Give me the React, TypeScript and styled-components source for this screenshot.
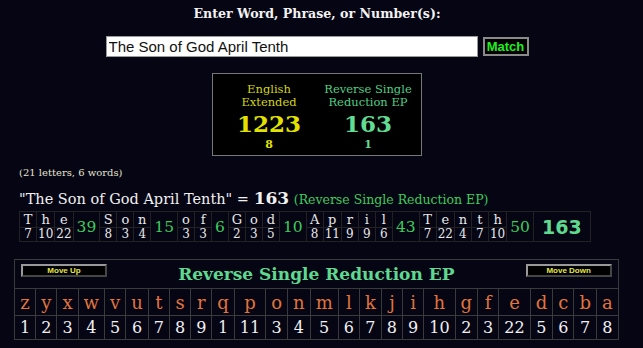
import styled, { createGlobalStyle } from 'styled-components'

const GlobalStyle = createGlobalStyle`
  html, body {
    margin: 0;
    padding: 0;
    background: #050514;
  }
  body {
    font-family: "DejaVu Serif", serif;
    color: #eeeeee;
  }
`

const phrase = 'The Son of God April Tenth'

const words = [
  { letters: ['T', 'h', 'e'], values: [7, 10, 22], total: 39 },
  { letters: ['S', 'o', 'n'], values: [8, 3, 4], total: 15 },
  { letters: ['o', 'f'], values: [3, 3], total: 6 },
  { letters: ['G', 'o', 'd'], values: [2, 3, 5], total: 10 },
  { letters: ['A', 'p', 'r', 'i', 'l'], values: [8, 11, 9, 9, 6], total: 43 },
  { letters: ['T', 'e', 'n', 't', 'h'], values: [7, 22, 4, 7, 10], total: 50 },
]

const cipher = [
  ['z', 1], ['y', 2], ['x', 3], ['w', 4], ['v', 5], ['u', 6], ['t', 7],
  ['s', 8], ['r', 9], ['q', 1], ['p', 11], ['o', 3], ['n', 4], ['m', 5],
  ['l', 6], ['k', 7], ['j', 8], ['i', 9], ['h', 10], ['g', 2], ['f', 3],
  ['e', 22], ['d', 5], ['c', 6], ['b', 7], ['a', 8],
] as const

export default function App() {
  return (
    <>
      <GlobalStyle />
      <Page>
        <Heading>Enter Word, Phrase, or Number(s):</Heading>
        <SearchRow>
          <PhraseInput defaultValue={phrase} />
          <MatchButton>Match</MatchButton>
        </SearchRow>
        <ScoreBox>
          <ScoreCol tone="#d4d414" strong="#e2e200">
            <ScoreLabel>
              English
              <br />
              Extended
            </ScoreLabel>
            <ScoreValue>1223</ScoreValue>
            <ScoreSub>8</ScoreSub>
          </ScoreCol>
          <ScoreCol tone="#4fcf86" strong="#62dc93">
            <ScoreLabel>
              Reverse Single
              <br />
              Reduction EP
            </ScoreLabel>
            <ScoreValue>163</ScoreValue>
            <ScoreSub>1</ScoreSub>
          </ScoreCol>
        </ScoreBox>

        <Details>
          <Counts>(21 letters, 6 words)</Counts>
          <Result>
            "{phrase}" = <ResultNum>163</ResultNum>{' '}
            <ResultCipher>(Reverse Single Reduction EP)</ResultCipher>
          </Result>
          <Breakdown>
            <tbody>
              <tr>
                {words.map((w, wi) => [
                  ...w.letters.map((l, li) => (
                    <LetterCell key={`l${wi}-${li}`}>{l}</LetterCell>
                  )),
                  <WordTotal key={`t${wi}`} rowSpan={2}>
                    {w.total}
                  </WordTotal>,
                ])}
                <GrandTotal rowSpan={2}>163</GrandTotal>
              </tr>
              <tr>
                {words.map((w, wi) =>
                  w.values.map((v, vi) => (
                    <ValueCell key={`v${wi}-${vi}`}>{v}</ValueCell>
                  )),
                )}
              </tr>
            </tbody>
          </Breakdown>
        </Details>

        <CipherTable>
          <tbody>
            <tr>
              <HeaderCell colSpan={26}>
                <HeaderBar>
                  <MoveButton>Move Up</MoveButton>
                  <CipherTitle>Reverse Single Reduction EP</CipherTitle>
                  <MoveButton>Move Down</MoveButton>
                </HeaderBar>
              </HeaderCell>
            </tr>
            <tr>
              {cipher.map(([l]) => (
                <CipherLetter key={l}>{l}</CipherLetter>
              ))}
            </tr>
            <tr>
              {cipher.map(([l, v]) => (
                <CipherValue key={l}>{v}</CipherValue>
              ))}
            </tr>
          </tbody>
        </CipherTable>
      </Page>
    </>
  )
}

const Page = styled.div`
  width: 634px;
  padding-top: 6px;
`
const Heading = styled.div`
  text-align: center;
  font-weight: bold;
  font-size: 12.6px;
  line-height: 16px;
  color: #f2f2f2;
`
const SearchRow = styled.div`
  display: flex;
  justify-content: center;
  align-items: center;
  gap: 5px;
  margin-top: 14px;
`
const PhraseInput = styled.input`
  box-sizing: border-box;
  width: 372px;
  height: 21px;
  padding: 0 2px;
  border: 1px solid #999;
  background: #fff;
  color: #111;
  font-family: "Liberation Sans", Arial, sans-serif;
  font-size: 15px;
  outline: none;
`
const MatchButton = styled.button`
  box-sizing: border-box;
  height: 19px;
  width: 46px;
  padding: 0;
  background: #000;
  color: #22ee22;
  border: 2px solid #8a8a8a;
  font-family: "Liberation Sans", Arial, sans-serif;
  font-weight: bold;
  font-size: 13px;
  line-height: 14px;
`
const ScoreBox = styled.div`
  box-sizing: border-box;
  width: 210px;
  height: 83px;
  margin: 16px auto 0;
  display: flex;
  justify-content: space-between;
  padding: 9px 6px 0 9px;
  background: #000;
  border: 1px solid #777;
`
const ScoreCol = styled.div<{ tone: string; strong: string }>`
  width: 94px;
  display: flex;
  flex-direction: column;
  align-items: center;
  color: ${(p) => p.tone};

  & > :not(:first-child) {
    color: ${(p) => p.strong};
  }
`
const ScoreLabel = styled.div`
  font-size: 11.5px;
  line-height: 13px;
  text-align: center;
`
const ScoreValue = styled.div`
  font-size: 23px;
  font-weight: bold;
  line-height: 26px;
  margin-top: 2px;
`
const ScoreSub = styled.div`
  font-size: 11px;
  font-weight: bold;
  line-height: 13px;
  margin-top: 1px;
`
const Details = styled.div`
  padding-left: 19px;
  margin-top: 10px;
`
const Counts = styled.div`
  font-size: 10px;
  line-height: 14px;
  color: #e4e4d0;
`
const Result = styled.div`
  margin-top: 9px;
  font-size: 14.5px;
  line-height: 18px;
  color: #f0f0f0;
`
const ResultNum = styled.span`
  font-size: 17px;
  font-weight: bold;
`
const ResultCipher = styled.span`
  font-size: 12.5px;
  color: #3dcc5c;
`
const Breakdown = styled.table`
  border-collapse: collapse;
  margin-top: 2px;
`
const LetterCell = styled.td`
  border: 1px solid #222;
  width: 14px;
  padding: 0 1px;
  height: 15px;
  font-size: 13px;
  line-height: 15px;
  text-align: center;
  color: #e8e8e8;
`
const ValueCell = styled(LetterCell)`
  height: 13px;
  font-size: 12px;
  line-height: 13px;
`
const WordTotal = styled.td`
  border: 1px solid #222;
  padding: 0 3px;
  font-size: 15.5px;
  text-align: center;
  color: #3dcc5c;
`
const GrandTotal = styled.td`
  border: 1px solid #222;
  padding: 0 8px;
  font-family: "DejaVu Sans", Verdana, sans-serif;
  font-size: 19px;
  font-weight: bold;
  color: #5fd98f;
`
const CipherTable = styled.table`
  border-collapse: collapse;
  margin: 17px 0 0 14px;
  border: 1px solid #3a3a3a;
`
const HeaderCell = styled.td`
  padding: 3px 6px 0 6px;
  height: 25px;
  vertical-align: top;
`
const HeaderBar = styled.div`
  display: flex;
  justify-content: space-between;
  align-items: flex-start;
`
const MoveButton = styled.button`
  box-sizing: border-box;
  width: 86px;
  height: 13px;
  margin-top: 1px;
  padding: 0;
  background: #000;
  border: 2px outset #999;
  color: #e6e64a;
  font-family: "Liberation Sans", Arial, sans-serif;
  font-size: 8px;
  font-weight: bold;
  line-height: 9px;
`
const CipherTitle = styled.div`
  font-size: 17px;
  font-weight: bold;
  line-height: 22px;
  color: #5fd98f;
`
const CipherLetter = styled.td`
  border: 1px solid #3a3a3a;
  height: 26px;
  padding: 0 5px;
  text-align: center;
  font-size: 18px;
  color: #e0743c;
`
const CipherValue = styled.td`
  border: 1px solid #3a3a3a;
  height: 23px;
  padding: 0 5px;
  text-align: center;
  font-size: 16px;
  color: #f0f0f0;
`
